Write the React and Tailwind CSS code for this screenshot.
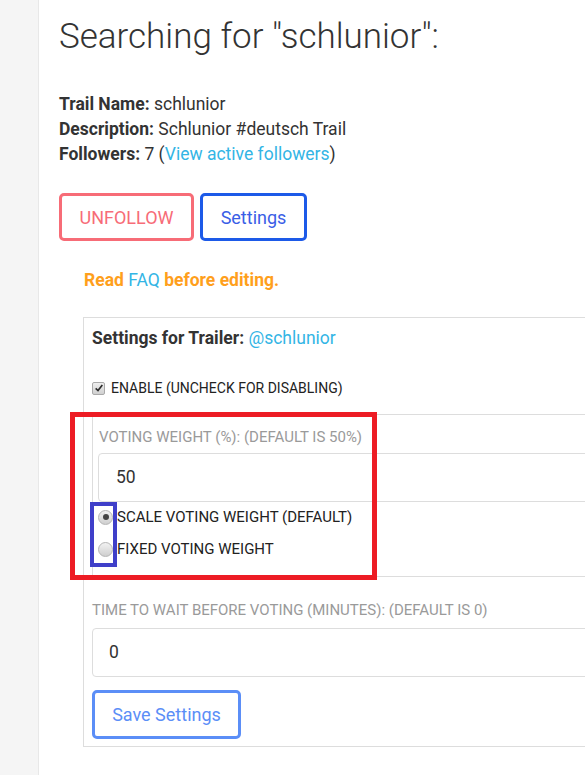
import React from 'react'

const Radio = ({ checked }) => (
    <span className='relative flex h-[15px] w-[15px] items-center justify-center rounded-full border border-[#b5b5b5] bg-gradient-to-b from-[#f2f2f2] to-[#cfcfcf]'>
        {checked && <span className='h-[6px] w-[6px] rounded-full bg-[#444]' />}
    </span>
)

const Checkbox = () => (
    <span className='flex h-[13px] w-[13px] items-center justify-center rounded-[2px] border border-[#a9a9a9] bg-gradient-to-b from-[#eeeeee] to-[#d0d0d0]'>
        <svg viewBox='0 0 12 12' className='h-[10px] w-[10px]'>
            <path d='M2 6.5 L4.8 9 L10 2.5' fill='none' stroke='#2b2b2b' strokeWidth='2' />
        </svg>
    </span>
)

export default function App() {
    return (
        <div className='flex h-[775px] w-[585px] overflow-hidden bg-white font-["Roboto","Liberation_Sans",sans-serif] text-[#333]'>
            <div className='w-[39px] shrink-0 border-r border-[#e8e8e8] bg-[#f5f5f5]' />

            <div className='flex-1 pl-[20px]'>
                <h1 className='mt-[17px] text-[35px] font-light leading-[40px] text-[#333] whitespace-nowrap'>
                    Searching for "schlunior":
                </h1>

                <div className='mt-[35px] text-[17.5px] leading-[25px]'>
                    <div><b className='font-bold'>Trail Name:</b> schlunior</div>
                    <div><b className='font-bold'>Description:</b> Schlunior #deutsch Trail</div>
                    <div>
                        <b className='font-bold'>Followers:</b> 7 (<span className='text-[#33b5e5]'>View active followers</span>)
                    </div>
                </div>

                <div className='mt-[26px] flex gap-[6px]'>
                    <button className='h-[48px] w-[135px] rounded-[5px] border-[3px] border-[#f76c77] text-[18px] uppercase text-[#f76c77]'>
                        Unfollow
                    </button>
                    <button className='h-[48px] w-[107px] rounded-[5px] border-[3px] border-[#1d5ae8] text-[18px] text-[#3a5ee6]'>
                        Settings
                    </button>
                </div>

                <p className='mt-[27px] pl-[25px] text-[17.5px] font-bold leading-[24px] text-[#ff9f1c]'>
                    Read <span className='font-normal text-[#33b5e5]'>FAQ</span> before editing.
                </p>

                <div className='ml-[24px] mt-[25px] w-[560px] border border-[#dddddd] pl-[8px] pr-[8px] pb-[7px]'>
                    <div className='mt-[8px] text-[17.5px] leading-[24px]'>
                        <b className='font-bold'>Settings for Trailer:</b>{' '}
                        <span className='text-[#33b5e5]'>@schlunior</span>
                    </div>

                    <label className='mt-[28px] flex items-center gap-[6px] text-[14px] uppercase leading-[20px] text-[#222]'>
                        <Checkbox />
                        Enable (uncheck for disabling)
                    </label>

                    <div className='relative mt-[16px] border border-[#dddddd] pl-[5px] pb-[17px]'>
                        <div className='pl-[1px] pt-[12px] text-[15px] uppercase leading-[20px] text-[#9a9a9a]'>
                            Voting weight (%): (Default is 50%)
                        </div>
                        <div className='mt-[6px] flex h-[49px] items-center rounded-[4px] border border-[#dddddd] pl-[17px] text-[17.5px] text-[#333]'>
                            50
                        </div>
                        <div className='mt-[5px] flex flex-col gap-[12px] text-[15px] uppercase leading-[20px] text-[#222]'>
                            <label className='flex items-center gap-[4px]'>
                                <Radio checked />
                                Scale voting weight (default)
                            </label>
                            <label className='flex items-center gap-[4px]'>
                                <Radio />
                                Fixed voting weight
                            </label>
                        </div>

                        <div className='pointer-events-none absolute left-[-23px] top-[-3px] h-[168px] w-[307px] border-[5px] border-[#ed1c24]' />
                        <div className='pointer-events-none absolute left-[-3px] top-[87px] h-[65px] w-[27px] border-[4px] border-[#3f3fc9]' />
                    </div>

                    <div className='mt-[23px] whitespace-nowrap text-[15px] uppercase leading-[20px] text-[#9a9a9a]'>
                        Time to wait before voting (minutes): (Default is 0)
                    </div>
                    <div className='mt-[8px] flex h-[49px] items-center rounded-[4px] border border-[#dddddd] pl-[16px] text-[17.5px] text-[#333]'>
                        0
                    </div>
                    <button className='mt-[13px] h-[49px] w-[149px] rounded-[5px] border-[3px] border-[#5b8ef7] text-[18px] text-[#5b8ef7]'>
                        Save Settings
                    </button>
                </div>
            </div>
        </div>
    )
}
